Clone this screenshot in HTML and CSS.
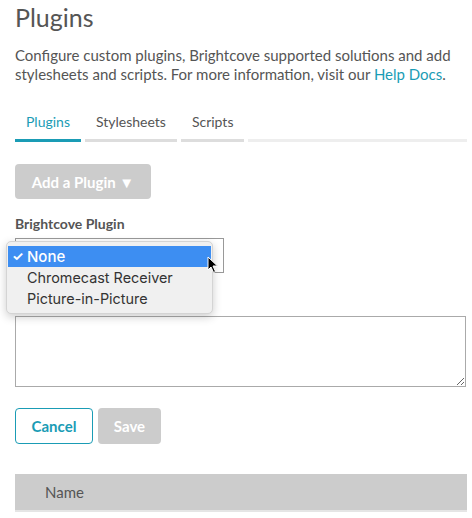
FILE: index.html
```html
<!DOCTYPE html>
<html>
<head>
<meta charset="utf-8">
<link rel="stylesheet" href="styles.css">
</head>
<body>
<div class="page">
  <h1 class="title">Plugins</h1>
  <p class="intro">Configure custom plugins, Brightcove supported solutions and add stylesheets and scripts. For more information, visit our <a class="link" href="#">Help Docs</a>.</p>
  <div class="tabs">
    <div class="tab active">Plugins</div>
    <div class="tab">Stylesheets</div>
    <div class="tab">Scripts</div>
    <div class="tab-rest"></div>
  </div>
  <button class="btn-add">Add a Plugin &#9660;</button>
  <div class="label">Brightcove Plugin</div>
  <div class="select-wrap">
    <div class="select"></div>
    <div class="menu">
      <div class="opt sel"><span class="check">&#10003;</span>None</div>
      <div class="opt">Chromecast Receiver</div>
      <div class="opt">Picture-in-Picture</div>
    </div>
    <svg class="cursor" width="12" height="18" viewBox="0 0 12 18"><path d="M1 1 L1 14 L4 11 L6.5 16.5 L8.5 15.5 L6 10 L10.5 10 Z" fill="#000" stroke="#fff" stroke-width="1"/></svg>
  </div>
  <div class="textarea-wrap">
    <textarea class="textarea"></textarea>
  </div>
  <div class="actions">
    <button class="btn-cancel">Cancel</button>
    <button class="btn-save">Save</button>
  </div>
  <div class="table-head">Name</div>
</div>
</body>
</html>
```
FILE: styles.css
```css
* { box-sizing: border-box; }
html, body { margin: 0; padding: 0; background: #fff; }
body { font-family: Lato, "Open Sans", sans-serif; color: #555; }
.page { padding: 0 5px 0 15px; }
.title { margin: 0; padding-top: 2px; font-size: 25px; font-weight: 400; line-height: 30px; color: #555; }
.intro { margin: 14px 0 0; font-size: 15px; line-height: 19px; color: #555; }
.link { color: #1a9cb5; text-decoration: none; }
.tabs { display: flex; gap: 4px; margin-top: 29px; }
.tab { font-size: 14px; line-height: 18px; padding: 0 11px 8px 11px; border-bottom: 3px solid #ddd; color: #555; }
.tab.active { color: #1a9cb5; border-bottom-color: #1a9cb5; }
.tab-rest { flex: 1; border-bottom: 3px solid #eee; }
.btn-add { display: block; margin-top: 22px; width: 136px; height: 35px; border: 0; border-radius: 4px; background: #ccc; color: #fff; font-family: Lato, sans-serif; font-weight: 700; font-size: 15px; padding: 0; }
.label { margin-top: 16px; font-size: 14px; font-weight: 700; line-height: 18px; }
.select-wrap { position: relative; margin-top: 5px; height: 35px; }
.select { width: 209px; height: 35px; border: 1px solid #999; background: #fff; }
.menu { position: absolute; left: -9px; top: 3px; width: 207px; padding: 4px 1px; background: #f0f0f0; border: 1px solid #d4d4d4; border-radius: 5px; box-shadow: 0 3px 10px rgba(0,0,0,0.2); font-family: Inter, "Noto Sans", sans-serif; font-size: 14.4px; }
.opt { height: 21px; line-height: 21px; padding-left: 19px; color: #333; position: relative; }
.opt.sel { background: #3d8ef2; color: #fff; font-weight: 500; font-size: 15px; }
.check { position: absolute; left: 4px; top: 0; font-size: 13px; font-weight: 700; }
.cursor { position: absolute; left: 192px; top: 18px; }
.textarea-wrap { margin-top: 43px; }
.textarea { display: block; width: 451px; height: 71px; border: 1px solid #aaa; resize: vertical; margin: 0; }
.actions { display: flex; gap: 5px; margin-top: 21px; }
.btn-cancel { width: 78px; height: 36px; border: 1px solid #1a9cb5; border-radius: 4px; background: #fff; color: #1a9cb5; font-family: Lato, sans-serif; font-weight: 700; font-size: 15px; padding: 0; }
.btn-save { width: 63px; height: 36px; border: 0; border-radius: 4px; background: #ccc; color: #fff; font-family: Lato, sans-serif; font-weight: 700; font-size: 15px; padding: 0; }
.table-head { margin-top: 30px; height: 38px; background: #ccc; border-bottom: 2px solid #e5e5e5; padding-left: 30px; line-height: 37px; font-size: 15px; color: #555; }
```
